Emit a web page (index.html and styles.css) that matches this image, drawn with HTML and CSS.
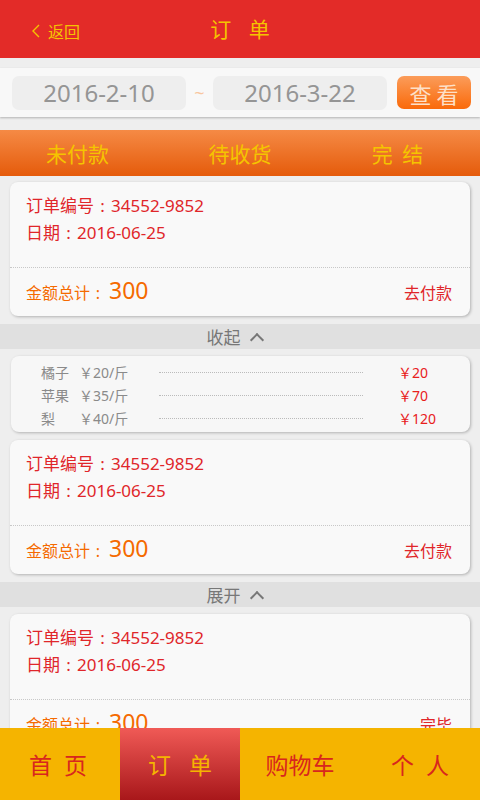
FILE: index.html
```html
<!DOCTYPE html>
<html lang="zh-CN">
<head>
  <meta charset="UTF-8" />
  <meta name="viewport" content="width=device-width, initial-scale=1.0"/>
  <title>订单</title>
  <link rel="stylesheet" href="styles.css">
</head>
<body>

  <header class="topbar">
    <a class="back" href="#">
      <svg width="10" height="14" viewBox="0 0 10 14"><path d="M8 1 L2 7 L8 13" fill="none" stroke="#f5c400" stroke-width="1.4"/></svg>
      返回
    </a>
    <h1>订&nbsp;单</h1>
  </header>

  <!-- date range filter -->
  <div class="filter">
    <div class="date">2016-2-10</div>
    <span class="tilde">~</span>
    <div class="date">2016-3-22</div>
    <button class="view-btn">查看</button>
  </div>

  <nav class="tabs">
    <span>未付款</span>
    <span>待收货</span>
    <span class="last">完&nbsp;结</span>
  </nav>

  <main class="list">
    <div class="card">
      <div class="card-info">
        <p>订单编号<span class="colon">:</span>34552-9852</p>
        <p>日期<span class="colon">:</span>2016-06-25</p>
      </div>
      <div class="card-foot">
        <span class="total">金额总计<span class="colon">:</span><b>300</b></span>
        <a class="action" href="#">去付款</a>
      </div>
    </div>

    <div class="toggle">收起 <i class="caret"></i></div>

    <div class="items">
      <div class="item"><span class="name">橘子</span><span class="unit">￥20/斤</span><span class="dots"></span><span class="price">￥20</span></div>
      <div class="item"><span class="name">苹果</span><span class="unit">￥35/斤</span><span class="dots"></span><span class="price">￥70</span></div>
      <div class="item"><span class="name">梨</span><span class="unit">￥40/斤</span><span class="dots"></span><span class="price">￥120</span></div>
    </div>

    <div class="card">
      <div class="card-info">
        <p>订单编号<span class="colon">:</span>34552-9852</p>
        <p>日期<span class="colon">:</span>2016-06-25</p>
      </div>
      <div class="card-foot">
        <span class="total">金额总计<span class="colon">:</span><b>300</b></span>
        <a class="action" href="#">去付款</a>
      </div>
    </div>

    <div class="toggle">展开 <i class="caret"></i></div>

    <div class="card">
      <div class="card-info">
        <p>订单编号<span class="colon">:</span>34552-9852</p>
        <p>日期<span class="colon">:</span>2016-06-25</p>
      </div>
      <div class="card-foot">
        <span class="total">金额总计<span class="colon">:</span><b>300</b></span>
        <a class="action" href="#">完毕</a>
      </div>
    </div>
  </main>

  <footer class="tabbar">
    <a href="#" class="spaced">首页</a>
    <a href="#" class="active spaced">订单</a>
    <a href="#">购物车</a>
    <a href="#" class="spaced">个人</a>
  </footer>

</body>
</html>
```

FILE: styles.css
```css
body {
  margin: 0;
  background: #eeeeee;
  font-family: "Noto Sans", "Noto Sans CJK SC", sans-serif;
  overflow: hidden;
  height: 800px;
}

a {
  text-decoration: none;
  color: inherit;
}

p {
  margin: 0;
}

/* top header */
.topbar {
  position: relative;
  height: 58px;
  background: #e32b28;
  display: flex;
  align-items: center;
  justify-content: center;
}

.topbar h1 {
  margin: 0 0 2px 6px;
  font-size: 21px;
  font-weight: normal;
  color: #f5c400;
  letter-spacing: 6px;
}

.back {
  position: absolute;
  left: 31px;
  top: 19px;
  display: flex;
  align-items: center;
  gap: 7px;
  font-size: 16px;
  color: #f5c400;
}

/* filter */
.filter {
  margin-top: 10px;
  height: 49px;
  background: #f8f8f8;
  box-shadow: 0 1px 2px rgba(0, 0, 0, 0.25);
  display: flex;
  align-items: center;
  padding: 0 9px 0 12px;
  box-sizing: border-box;
}

.date {
  width: 174px;
  height: 34px;
  border-radius: 7px;
  background: #eeeeee;
  color: #959595;
  font-size: 24px;
  line-height: 34px;
  text-align: center;
}

.tilde {
  width: 27px;
  text-align: center;
  color: #f8c7a0;
  font-size: 18px;
}

.view-btn {
  margin-left: auto;
  width: 74px;
  height: 33px;
  border: none;
  border-radius: 7px;
  background: linear-gradient(#fb9c5a, #fa6a0a);
  color: #fde0c8;
  font-family: inherit;
  font-size: 22px;
  letter-spacing: 5px;
  padding: 0 0 0 5px;
}

/* status tabs */
.tabs {
  margin-top: 13px;
  height: 46px;
  background: linear-gradient(#f58a45, #e55b0b);
  display: grid;
  grid-template-columns: 155px 170px 155px;
  align-items: center;
  text-align: center;
  font-size: 21px;
  color: #f5c400;
}

.tabs .last {
  padding-right: 8px;
  letter-spacing: 2px;
}

/* order list */
.list {
  padding: 6px 10px 0;
}

.card {
  background: #f9f9f9;
  border-radius: 8px;
  box-shadow: 1px 1px 3px rgba(0, 0, 0, 0.25);
  color: #e0262a;
}

.card-info {
  height: 86px;
  box-sizing: border-box;
  padding: 10px 16px 0;
  font-size: 17px;
  line-height: 27px;
  border-bottom: 1px dotted #c8c8c8;
}

.colon {
  display: inline-block;
  width: 1em;
  text-align: center;
}

.card-foot {
  height: 48px;
  display: flex;
  align-items: center;
  justify-content: space-between;
  padding: 0 18px 0 16px;
}

.total {
  color: #f56a00;
  font-size: 16px;
  margin-bottom: 4px;
}

.total b {
  font-weight: normal;
  font-size: 23px;
  margin-left: 3px;
}

.action {
  font-size: 16px;
  margin-bottom: 1px;
}

.toggle {
  margin: 8px -10px 7px;
  height: 25px;
  background: #e0e0e0;
  color: #777;
  font-size: 17px;
  display: flex;
  align-items: center;
  justify-content: center;
  gap: 11px;
  padding-right: 12px;
}

.caret {
  width: 8px;
  height: 8px;
  border-left: 2px solid #777;
  border-top: 2px solid #777;
  transform: rotate(45deg);
  margin-top: 6px;
}

.items {
  margin: 0 0 8px 1px;
  padding: 4px 0 3px;
  background: #f7f7f7;
  border-radius: 8px;
  box-shadow: 1px 1px 3px rgba(0, 0, 0, 0.25);
}

.item {
  height: 23px;
  display: flex;
  align-items: center;
  padding-left: 30px;
  font-size: 14px;
  color: #8a8a8a;
}

.item .name {
  width: 38px;
}

.item .unit {
  width: 80px;
}

.item .dots {
  width: 204px;
  border-bottom: 1px dotted #bbb;
  margin-top: 2px;
}

.item .price {
  margin-left: 35px;
  color: #e8201c;
}

/* bottom navigation */
.tabbar {
  position: fixed;
  left: 0;
  right: 0;
  bottom: 0;
  height: 72px;
  background: #f5b400;
  display: grid;
  grid-template-columns: repeat(4, 1fr);
}

.tabbar a {
  display: flex;
  align-items: center;
  justify-content: center;
  font-size: 23px;
  color: #d8261e;
}

.tabbar a.spaced {
  letter-spacing: 12px;
  padding-left: 12px;
}

.tabbar a:first-child {
  padding-left: 8px;
}

.tabbar a.active {
  background: linear-gradient(#f05a56, #a8171a);
  color: #f5b400;
  letter-spacing: 18px;
  padding-left: 18px;
}
```
